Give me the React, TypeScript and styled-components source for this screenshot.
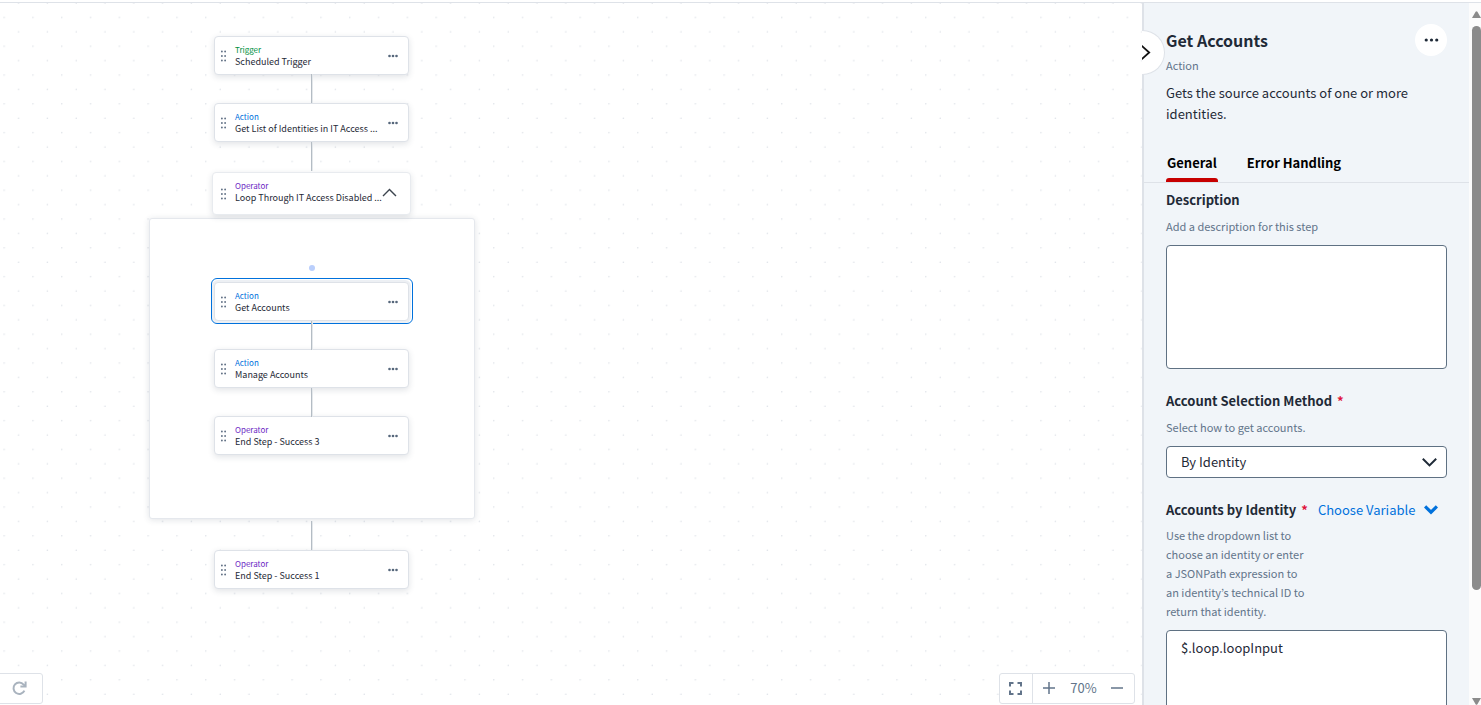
import React, { useState } from "react";
import styled, { createGlobalStyle, css } from "styled-components";

const color = {
  ink: "#1f2a37",
  muted: "#62748a",
  line: "#dee2e8",
  field: "#5f7183",
  blue: "#0071dc",
  green: "#008f3e",
  purple: "#6c1fc4",
  red: "#c70000",
  panel: "#f1f5f9",
};

const GlobalStyle = createGlobalStyle`
  *, *::before, *::after { box-sizing: border-box; }
  body { margin: 0; }
  body, button, input, select, textarea {
    font-family: "Noto Sans CJK KR", "Noto Sans", sans-serif;
    color: ${color.ink};
  }
  button { padding: 0; border: 0; background: none; cursor: pointer; }
  h1, h2, p { margin: 0; }
`;

const Page = styled.div`
  display: flex;
  height: 100vh;
  padding-top: 2px;
  overflow: hidden;
  background: #fff;
`;

const Canvas = styled.main`
  position: relative;
  flex: 1;
  min-width: 0;
  overflow: hidden;
  border-top: 1px solid ${color.line};
`;

const Grid = styled.svg`
  position: absolute;
  inset: 0;
  width: 100%;
  height: 100%;
`;

const Connector = styled.div<{ $top: number }>`
  position: absolute;
  left: 311px;
  top: ${(p) => p.$top}px;
  width: 1px;
  height: 29px;
  background: #b4bcc4;
  box-shadow: 1px 0 0 #e4e8eb;
`;

const LoopBody = styled.section`
  position: absolute;
  left: 149px;
  top: 215px;
  width: 326px;
  height: 301px;
  border: 1px solid #e5e8ed;
  border-radius: 3px;
  background: #fff;
  box-shadow: 0 1px 6px rgba(40, 60, 80, 0.14);
`;

const EntryPoint = styled.div`
  position: absolute;
  left: 309px;
  top: 262px;
  width: 6px;
  height: 6px;
  border-radius: 50%;
  background: #bacffc;
`;

const Card = styled.article<{ $top: number; $wide?: boolean; $selected?: boolean }>`
  position: absolute;
  left: 214px;
  top: ${(p) => p.$top}px;
  display: flex;
  align-items: center;
  width: 195px;
  height: 39px;
  padding: 0 10px 0 6px;
  border: 1px solid ${color.line};
  border-radius: 4px;
  background: #fff;
  box-shadow: 0 2px 6px rgba(40, 60, 80, 0.14);
  ${(p) =>
    p.$wide &&
    css`
      left: 212px;
      width: 199px;
      height: 43px;
      padding: 0 13px 0 8px;
      border-color: #e8ebef;
      p:first-child { margin-top: -4px; }
      button { padding-bottom: 3px; }
    `}
  ${(p) =>
    p.$selected &&
    css`
      box-shadow: 0 0 0 2px #edf0f4;
      &::before {
        content: "";
        position: absolute;
        inset: -5px -5px -4px -4px;
        border: 1px solid ${color.blue};
        border-radius: 6px;
      }
    `}
`;

const CardText = styled.div`
  flex: 1;
  min-width: 0;
  margin-left: 9px;
`;

const Kind = styled.p<{ $tone: string }>`
  font-size: 8px;
  line-height: 12px;
  color: ${(p) => p.$tone};
`;

const Name = styled.p`
  font-size: 9px;
  line-height: 12px;
  white-space: nowrap;
`;

const IconButton = styled.button`
  display: flex;
  align-items: center;
  justify-content: center;
  flex: none;
`;

const UndoBar = styled.div`
  position: absolute;
  left: -1px;
  bottom: 1px;
  display: flex;
  width: 44px;
  height: 31px;
  border: 1px solid ${color.line};
  border-radius: 0 3px 3px 0;
  background: #fff;
  button { flex: 1; padding-right: 4px; }
`;

const ZoomBar = styled.div`
  position: absolute;
  right: 7px;
  bottom: 1px;
  display: flex;
  width: 136px;
  height: 31px;
  border: 1px solid ${color.line};
  border-radius: 3px;
  background: #fff;
`;

const ZoomButton = styled(IconButton)<{ $divided?: boolean }>`
  width: 33px;
  padding: 0 2px 1px 0;
  border-right: ${(p) => (p.$divided ? `1px solid ${color.line}` : "0")};
`;

const ZoomLevel = styled.output`
  flex: 1;
  font-size: 13px;
  line-height: 27px;
  text-align: center;
  color: ${color.muted};
`;

const Panel = styled.aside`
  position: relative;
  display: flex;
  flex-direction: column;
  flex: none;
  width: 327px;
  border-top: 1px solid ${color.line};
  border-left: 2px solid ${color.line};
  background: ${color.panel};
`;

const Collapse = styled(IconButton)`
  position: absolute;
  left: -2px;
  top: 27px;
  width: 23px;
  height: 45px;
  justify-content: flex-start;
  border: 1px solid ${color.line};
  border-left: 0;
  border-radius: 0 23px 23px 0;
  background: #fff;
`;

const PanelHead = styled.header`
  padding: 21px 22px 0;
`;

const TitleRow = styled.div`
  display: flex;
  align-items: flex-start;
  justify-content: space-between;
`;

const Title = styled.h1`
  font-size: 16px;
  line-height: 32px;
  font-weight: 700;
`;

const RoundButton = styled(IconButton)`
  width: 32px;
  height: 32px;
  border-radius: 50%;
  background: #fff;
`;

const Subtitle = styled.p`
  font-size: 11px;
  line-height: 18px;
  color: ${color.muted};
`;

const Summary = styled.p`
  margin-top: 8px;
  font-size: 13px;
  line-height: 21px;
`;

const Tabs = styled.div`
  display: flex;
  gap: 28px;
  margin-top: 21px;
  padding: 0 22px;
  border-bottom: 1px solid ${color.line};
`;

const Tab = styled.button<{ $active: boolean }>`
  position: relative;
  height: 37px;
  padding: 0 1px 2px;
  font-size: 13px;
  line-height: 35px;
  font-weight: 700;
  color: #000;
  &::after {
    content: "";
    position: absolute;
    left: 0;
    right: 0;
    bottom: 0;
    height: 4px;
    border-radius: 3px 3px 0 0;
    background: ${(p) => (p.$active ? color.red : "transparent")};
  }
`;

const Fields = styled.form`
  flex: 1;
  min-height: 0;
  overflow-y: auto;
  scrollbar-width: none;
  display: flex;
  flex-direction: column;
  gap: 21px;
  padding: 6px 22px 22px;
`;

const Field = styled.div`
  display: flex;
  flex-direction: column;
  flex: none;
`;

const LabelRow = styled.div`
  display: flex;
  align-items: center;
  gap: 10px;
`;

const Label = styled.label`
  font-size: 13px;
  line-height: 21px;
  font-weight: 700;
`;

const Required = styled.span`
  margin-left: 5px;
  color: #e0143c;
`;

const Hint = styled.p<{ $narrow?: boolean }>`
  max-width: ${(p) => (p.$narrow ? "142px" : "none")};
  margin: ${(p) => (p.$narrow ? "6px 0 9px" : "7px 0 9px")};
  font-size: 11px;
  line-height: 19px;
  color: ${color.muted};
`;

const fieldBox = css`
  width: 100%;
  border: 1px solid ${color.field};
  border-radius: 4px;
  background: #fff;
  font-size: 13px;
  outline: none;
`;

const TextArea = styled.textarea`
  ${fieldBox}
  display: block;
  height: 124px;
  padding: 6px 14px;
  line-height: 21px;
  resize: none;
`;

const SelectWrap = styled.div`
  display: grid;
  align-items: center;
  > * { grid-area: 1 / 1; }
  svg { justify-self: end; margin-right: 10px; pointer-events: none; }
`;

const Select = styled.select`
  ${fieldBox}
  appearance: none;
  height: 32px;
  padding: 0 14px 2px;
`;

const LinkButton = styled.button`
  display: flex;
  align-items: center;
  gap: 9px;
  font-size: 13px;
  line-height: 21px;
  color: ${color.blue};
`;

const Scrollbar = styled.div`
  display: flex;
  flex-direction: column;
  align-items: flex-end;
  flex: none;
  width: 12px;
  padding-top: 8px;
  border-top: 1px solid ${color.line};
  background: #fcfcfc;
  overflow: hidden;
`;

const Track = styled.div`
  flex: 1;
  width: 9px;
  margin: 8px 0 0;
`;

const Thumb = styled.div`
  height: 84%;
  border-radius: 5px;
  background: #8b8b8b;
`;

const tones = { Trigger: color.green, Action: color.blue, Operator: color.purple };

type Step = { kind: keyof typeof tones; name: string; top: number; wide?: boolean; selected?: boolean };

const steps: Step[] = [
  { kind: "Trigger", name: "Scheduled Trigger", top: 33 },
  { kind: "Action", name: "Get List of Identities in IT Access ...", top: 100 },
  { kind: "Operator", name: "Loop Through IT Access Disabled ...", top: 169, wide: true },
  { kind: "Action", name: "Get Accounts", top: 279, selected: true },
  { kind: "Action", name: "Manage Accounts", top: 346 },
  { kind: "Operator", name: "End Step - Success 3", top: 413 },
  { kind: "Operator", name: "End Step - Success 1", top: 547 },
];

const Grip = () => (
  <svg width="5" height="12" viewBox="0 0 5 12" fill="#5b6b80" aria-hidden="true">
    {[1.5, 6, 10.5].map((y) => (
      <React.Fragment key={y}>
        <circle cx="0.9" cy={y} r="0.9" />
        <circle cx="4.1" cy={y} r="0.9" />
      </React.Fragment>
    ))}
  </svg>
);

const Dots = ({ size, fill }: { size: number; fill: string }) => (
  <svg width={size} height="4" viewBox={`0 0 ${size} 4`} fill={fill} aria-hidden="true">
    {[0.15, 0.5, 0.85].map((x) => (
      <circle key={x} cx={x * size} cy="2" r={size > 12 ? 1.6 : 1.3} />
    ))}
  </svg>
);

function StepCard({ step }: { step: Step }) {
  return (
    <Card $top={step.top} $wide={step.wide} $selected={step.selected}>
      <Grip />
      <CardText>
        <Kind $tone={tones[step.kind]}>{step.kind}</Kind>
        <Name>{step.name}</Name>
      </CardText>
      <IconButton aria-label={step.wide ? "Collapse loop" : "Step options"}>
        {step.wide ? (
          <svg width="15" height="9" viewBox="0 0 15 9" fill="none" stroke="#3c444e" strokeWidth="1.4">
            <path d="M1 8 7.5 1.4 14 8" />
          </svg>
        ) : (
          <Dots size={10} fill="#56677b" />
        )}
      </IconButton>
    </Card>
  );
}

export default function App() {
  const [tab, setTab] = useState("General");
  return (
    <Page>
      <GlobalStyle />
      <Canvas>
        <Grid aria-hidden="true">
          <defs>
            <pattern id="dots" x="3.4" y="13.7" width="28.8" height="28.8" patternUnits="userSpaceOnUse">
              <circle cx="0.8" cy="0.8" r="0.7" fill="#d9dde4" />
              <circle cx="15.2" cy="15.2" r="0.7" fill="#d9dde4" />
            </pattern>
          </defs>
          <rect width="100%" height="100%" fill="url(#dots)" />
        </Grid>
        <LoopBody aria-label="Loop steps" />
        <EntryPoint />
        {steps.map((s) => (
          <StepCard key={s.name} step={s} />
        ))}
        {[71, 139, 318, 385, 518].map((top) => (
          <Connector key={top} $top={top} />
        ))}
        <UndoBar>
          <IconButton aria-label="Redo">
            <svg width="15" height="15" viewBox="0 0 15 15" fill="none" stroke="#a9b3be" strokeWidth="2">
              <path d="M12.4 9.6A5.7 5.7 0 1 1 11.6 3.6L13.2 5" />
              <path d="M13.6 0.6V5.6H8.4" />
            </svg>
          </IconButton>
        </UndoBar>
        <ZoomBar>
          <ZoomButton $divided aria-label="Fit to screen">
            <svg width="13" height="13" viewBox="0 0 13 13" fill="none" stroke="#62748a" strokeWidth="2">
              <path d="M1 4.5V1H4.5M8.5 1H12V4.5M12 8.5V12H8.5M4.5 12H1V8.5" />
            </svg>
          </ZoomButton>
          <ZoomButton aria-label="Zoom in">
            <svg width="12" height="12" viewBox="0 0 12 12" fill="none" stroke="#62748a" strokeWidth="1.5">
              <path d="M6 0V12M0 6H12" />
            </svg>
          </ZoomButton>
          <ZoomLevel>70%</ZoomLevel>
          <ZoomButton aria-label="Zoom out">
            <svg width="12" height="12" viewBox="0 0 12 12" fill="none" stroke="#62748a" strokeWidth="1.5">
              <path d="M0 6H12" />
            </svg>
          </ZoomButton>
        </ZoomBar>
      </Canvas>
      <Panel>
        <Collapse aria-label="Collapse panel">
          <svg width="9" height="15" viewBox="0 0 9 15" fill="none" stroke="#111" strokeWidth="1.8">
            <path d="M-0.5 0.7 7.2 7.5 -0.5 14.3" />
          </svg>
        </Collapse>
        <PanelHead>
          <TitleRow>
            <Title>Get Accounts</Title>
            <RoundButton aria-label="More options">
              <Dots size={15} fill="#1f2a37" />
            </RoundButton>
          </TitleRow>
          <Subtitle>Action</Subtitle>
          <Summary>Gets the source accounts of one or more identities.</Summary>
        </PanelHead>
        <Tabs role="tablist">
          {["General", "Error Handling"].map((t) => (
            <Tab key={t} role="tab" aria-selected={t === tab} $active={t === tab} onClick={() => setTab(t)}>
              {t}
            </Tab>
          ))}
        </Tabs>
        <Fields>
          <Field>
            <Label htmlFor="description">Description</Label>
            <Hint>Add a description for this step</Hint>
            <TextArea id="description" />
          </Field>
          <Field>
            <Label htmlFor="method">
              Account Selection Method<Required>*</Required>
            </Label>
            <Hint>Select how to get accounts.</Hint>
            <SelectWrap>
              <Select id="method" defaultValue="By Identity">
                <option>By Identity</option>
              </Select>
              <svg width="15" height="9" viewBox="0 0 15 9" fill="none" stroke="#1f2a37" strokeWidth="2">
                <path d="M0.8 0.8 7.5 7.4 14.2 0.8" />
              </svg>
            </SelectWrap>
          </Field>
          <Field>
            <LabelRow>
              <Label htmlFor="identity">
                Accounts by Identity<Required>*</Required>
              </Label>
              <LinkButton type="button">
                Choose Variable
                <svg width="14" height="10" viewBox="0 0 14 10" fill="none" stroke={color.blue} strokeWidth="3.2">
                  <path d="M1.1 1.4 7 7.2 12.9 1.4" />
                </svg>
              </LinkButton>
            </LabelRow>
            <Hint $narrow>
              Use the dropdown list to choose an identity or enter a JSONPath expression to an identity’s technical ID
              to return that identity.
            </Hint>
            <TextArea id="identity" defaultValue="$.loop.loopInput" />
          </Field>
        </Fields>
      </Panel>
      <Scrollbar aria-hidden="true">
        <svg width="9" height="7" viewBox="0 0 9 7" fill="#8b8b8b">
          <path d="M0 7 3.6 0.8Q4.5 -0.4 5.4 0.8L9 7Z" />
        </svg>
        <Track>
          <Thumb />
        </Track>
        <svg width="9" height="7" viewBox="0 0 9 7" fill="#8b8b8b">
          <path d="M0 0 3.6 6.2Q4.5 7.4 5.4 6.2L9 0Z" />
        </svg>
      </Scrollbar>
    </Page>
  );
}
